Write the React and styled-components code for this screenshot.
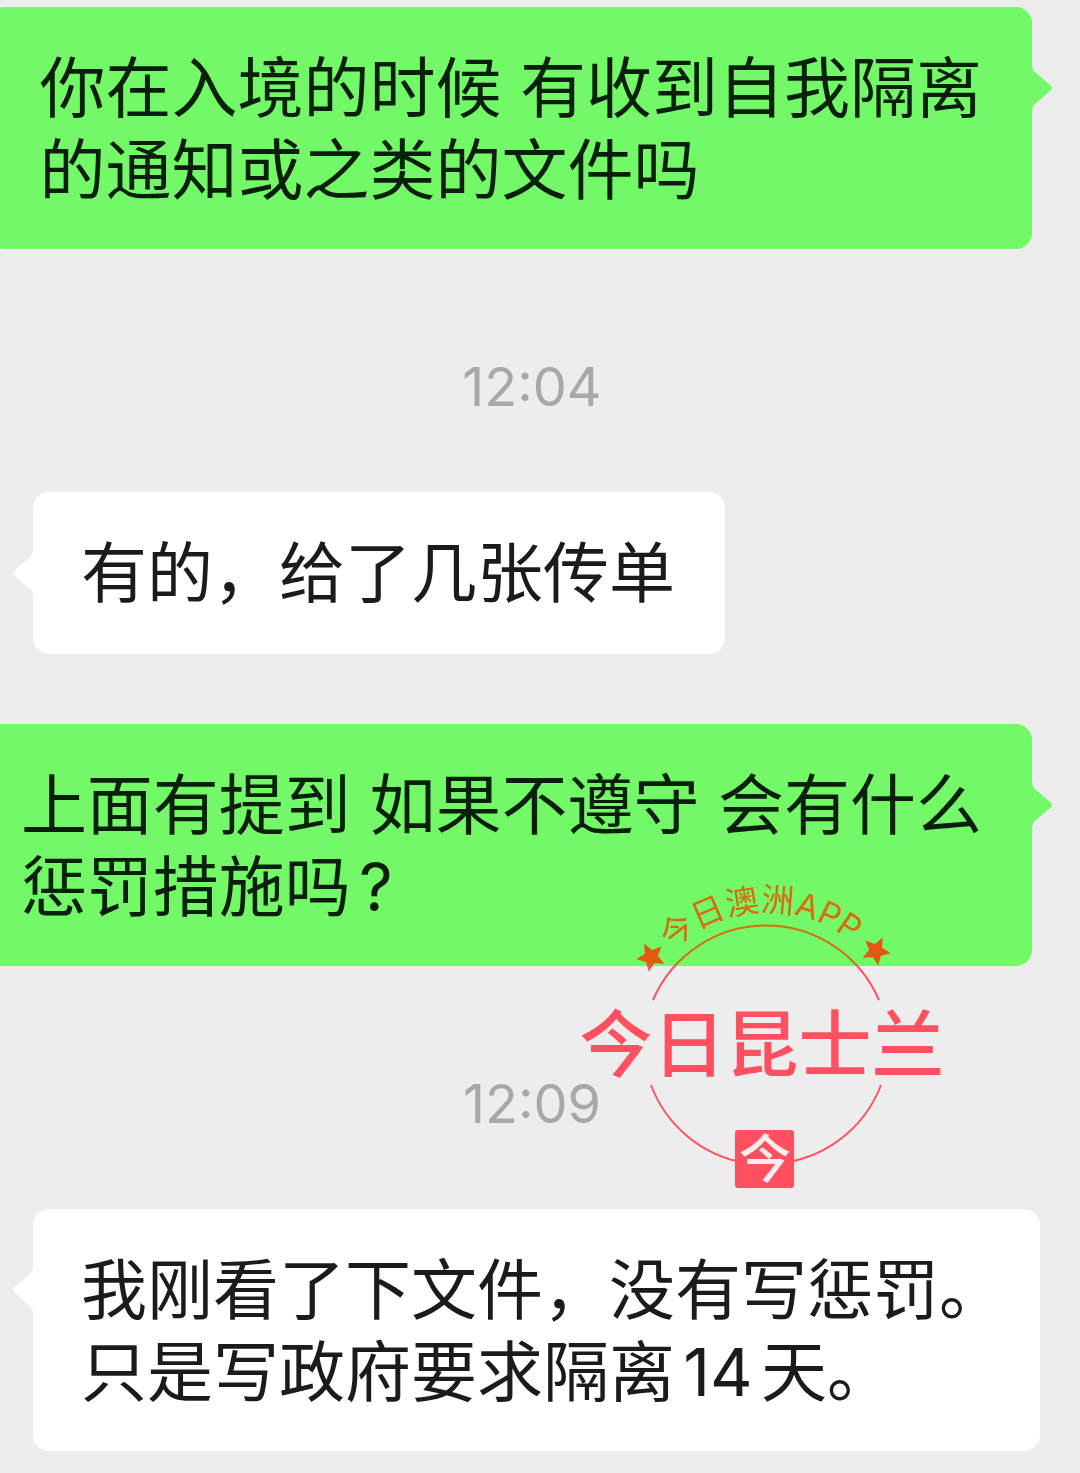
import React from "react";
import styled, { createGlobalStyle } from "styled-components";

const GREEN = "#73f968";
const PAGE = "#ededed";
const RED = "#ff5062";

const GlobalStyle = createGlobalStyle`
  *, *::before, *::after { box-sizing: border-box; }
  body {
    margin: 0;
    background: ${PAGE};
    font-family: Inter, "Noto Sans CJK SC", sans-serif;
    overflow-x: hidden;
  }
`;

const Chat = styled.main`
  display: flex;
  flex-direction: column;
  padding: 7px 0 21px;
  background: ${PAGE};
`;

const Row = styled.article`
  position: relative;
  display: flex;
  justify-content: ${(p) => (p.$sent ? "flex-end" : "flex-start")};
  padding: ${(p) => (p.$sent ? "0 48px 0 0" : "0 40px 0 33px")};
  margin-top: ${(p) => (p.$follows ? "70px" : "0")};
`;

const Bubble = styled.div`
  position: relative;
  flex: none;
  max-width: ${(p) => (p.$sent ? "none" : "100%")};
  min-height: 162px;
  padding: ${(p) => (p.$sent ? "40px 50px 38px" : "40px 50px 38px 48px")};
  border-radius: 16px;
  background: ${(p) => (p.$sent ? GREEN : "#ffffff")};
  color: ${(p) => (p.$sent ? "#08200a" : "#1b1b1b")};
`;

const Words = styled.p`
  margin: 0;
  font-size: 66px;
  line-height: 82px;
  white-space: pre;
  text-autospace: normal;
`;

const TailShape = styled.svg`
  position: absolute;
  top: 57px;
  ${(p) => (p.$sent ? "left: 100%;" : "right: 100%;")}
  width: 21px;
  height: 48px;
  fill: ${(p) => (p.$sent ? GREEN : "#ffffff")};
`;

const Time = styled.time`
  display: flex;
  align-items: center;
  justify-content: center;
  height: 243px;
  padding: 32px 16px 0 0;
  color: #a8a8a8;
  font-size: 54px;
  line-height: 64px;
`;

const Stamp = styled.svg`
  position: absolute;
  z-index: 1;
  top: 136px;
  right: 125px;
  width: 385px;
  height: 335px;
  pointer-events: none;
`;

const ArcText = styled.text`
  font-family: Inter, "Noto Sans CJK SC", sans-serif;
  font-size: 33px;
`;

const StampTitle = styled.text`
  font-family: "Noto Sans CJK SC", sans-serif;
  font-size: 73px;
  font-weight: 500;
`;

const StampBadge = styled.text`
  font-family: "Noto Sans CJK SC", sans-serif;
  font-size: 52px;
  font-weight: 500;
`;

function Tail({ sent }) {
  return (
    <TailShape $sent={sent} viewBox="0 0 21 48" aria-hidden="true">
      <path
        transform={sent ? undefined : "matrix(-1 0 0 1 21 0)"}
        d="M-1 0H0Q0 6 4 9L18 21Q22 24 18 27L4 39Q0 42 0 48H-1Z"
      />
    </TailShape>
  );
}

function starPoints(cx, cy, degrees) {
  return Array.from({ length: 10 }, (_, i) => {
    const radius = i % 2 ? 7 : 15;
    const a = ((degrees + i * 36) * Math.PI) / 180;
    return `${(cx + radius * Math.cos(a)).toFixed(1)},${(cy + radius * Math.sin(a)).toFixed(1)}`;
  }).join(" ");
}

function Watermark() {
  return (
    <Stamp viewBox="570 860 385 335">
      <defs>
        {/* The ink turns orange where it lies on the green bubble. */}
        <linearGradient id="ink" gradientUnits="userSpaceOnUse" x1="0" y1="866" x2="0" y2="1066">
          <stop offset="0.5" stopColor="#d3700f" />
          <stop offset="0.5" stopColor={RED} />
        </linearGradient>
        <linearGradient id="starInk" gradientUnits="userSpaceOnUse" x1="0" y1="866" x2="0" y2="1066">
          <stop offset="0.5" stopColor="#e25a12" />
          <stop offset="0.5" stopColor={RED} />
        </linearGradient>
        <path id="arc" d="M671.7 950.4A135 135 0 0 1 880 974" />
      </defs>
      <g fill="none" stroke="url(#ink)" strokeWidth="2">
        <path d="M653 1000A123 123 0 0 1 879 1000" />
        <path d="M651 1085A123 123 0 0 0 736 1161" />
        <path d="M881 1085A123 123 0 0 1 794 1161" />
      </g>
      <polygon fill="url(#starInk)" points={starPoints(651, 957, 99)} />
      <polygon fill="url(#starInk)" points={starPoints(876, 951, 81)} />
      <ArcText fill="#d3700f">
        <textPath href="#arc">今日澳洲APP</textPath>
      </ArcText>
      <StampTitle x="762" y="1071" textAnchor="middle" fill={RED}>
        今日昆士兰
      </StampTitle>
      <rect x="735" y="1130" width="59" height="58" rx="3" fill={RED} />
      <StampBadge x="765" y="1178" textAnchor="middle" fill="#fdebed">
        今
      </StampBadge>
    </Stamp>
  );
}

function Message({ sent = false, follows = false, text, children }) {
  return (
    <Row $sent={sent} $follows={follows}>
      <Bubble $sent={sent}>
        <Words>{text}</Words>
        <Tail sent={sent} />
      </Bubble>
      {children}
    </Row>
  );
}

export default function App() {
  return (
    <>
      <GlobalStyle />
      <Chat lang="zh-CN">
        <Message sent text={"你在入境的时候 有收到自我隔离\n的通知或之类的文件吗"} />
        <Time>12:04</Time>
        <Message text="有的，给了几张传单" />
        <Message sent follows text={"上面有提到 如果不遵守 会有什么\n惩罚措施吗?"}>
          <Watermark />
        </Message>
        <Time>12:09</Time>
        <Message text={"我刚看了下文件，没有写惩罚。\n只是写政府要求隔离14天。"} />
      </Chat>
    </>
  );
}
